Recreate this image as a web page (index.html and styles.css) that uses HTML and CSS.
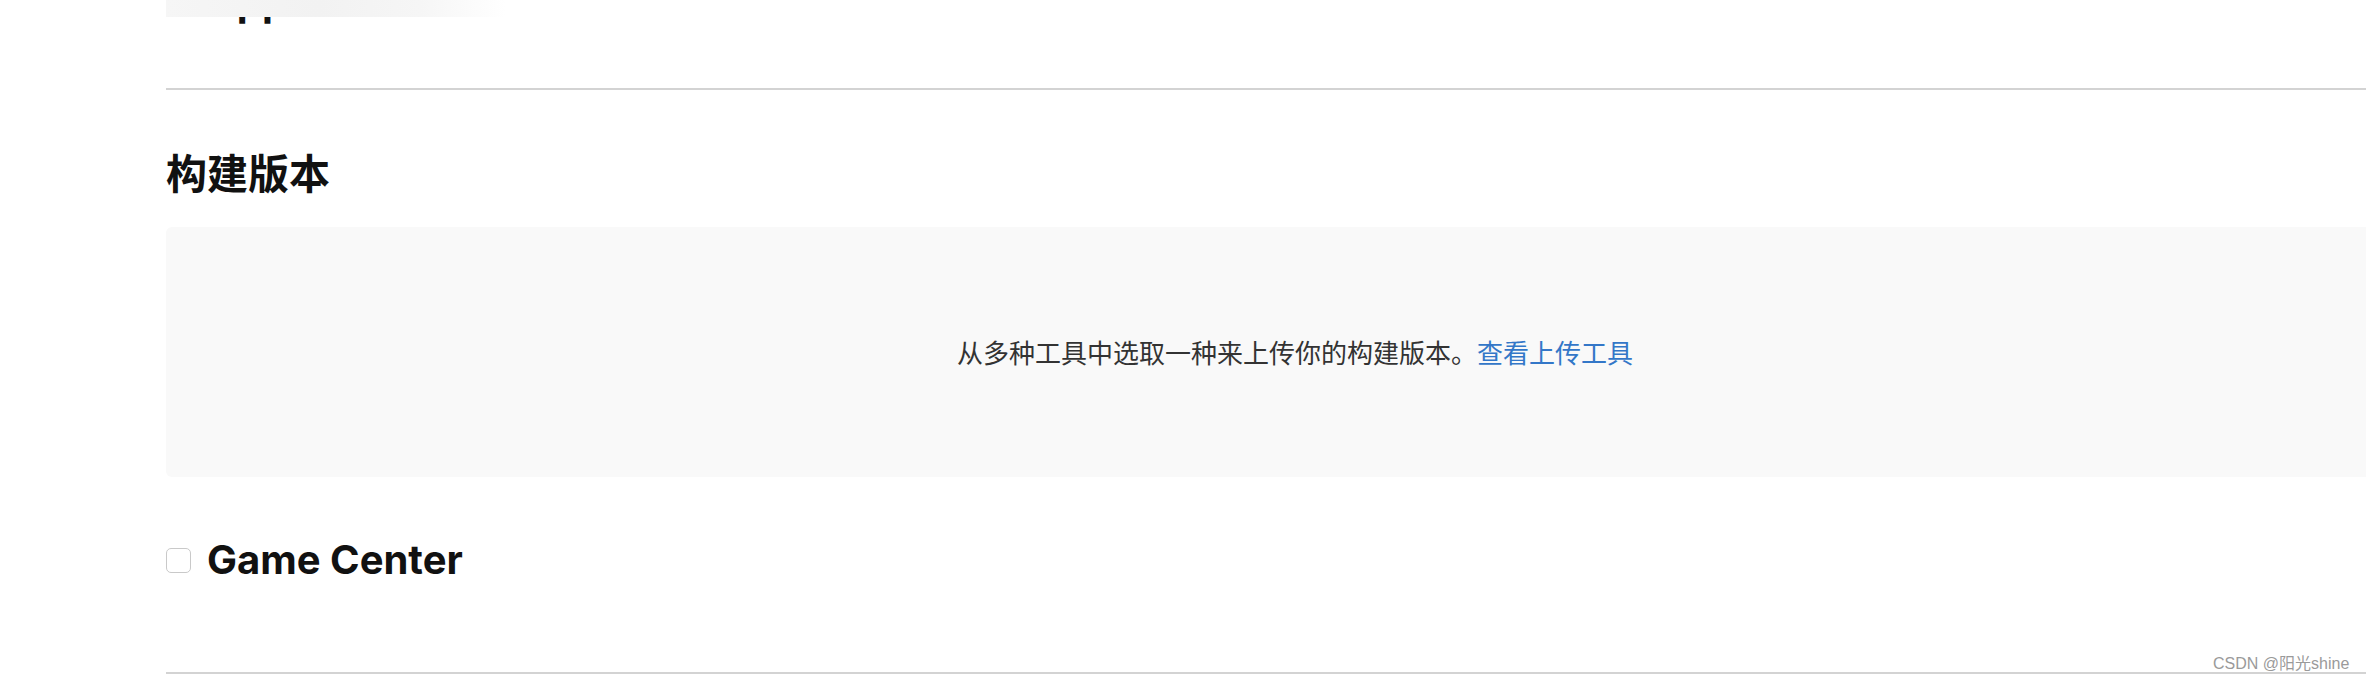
FILE: index.html
```html
<!DOCTYPE html>
<html lang="zh-CN">
<head>
<meta charset="utf-8">
<title>构建版本</title>
<link rel="stylesheet" href="styles.css">
</head>
<body>
<div class="page">
  <div class="prev-row">
    <div class="prev-title">App</div>
  </div>
  <div class="top-shade"></div>
  <hr class="divider divider-top">
  <section class="builds">
    <h2 class="section-title">构建版本</h2>
    <div class="empty-box">
      <p class="empty-text">从多种工具中选取一种来上传你的构建版本。<a class="link" href="#">查看上传工具</a></p>
    </div>
  </section>
  <section class="gc-row">
    <span class="checkbox"></span>
    <h2 class="gc-title">Game Center</h2>
  </section>
  <hr class="divider divider-bottom">
</div>
<div class="watermark">CSDN @阳光shine</div>
</body>
</html>
```

FILE: styles.css
```css
html, body {
  margin: 0;
  padding: 0;
  background: #ffffff;
  overflow: hidden;
  height: 682px;
}

body {
  font-family: Inter, "Noto Sans CJK SC", sans-serif;
  color: #111111;
  position: relative;
}

.page {
  padding-left: 166px;
  width: 2258px;
}

.prev-row {
  height: 26px;
  overflow: hidden;
}

.prev-title {
  font-size: 40px;
  font-weight: 700;
  line-height: 48px;
  margin-top: -22px;
  padding-left: 41px;
  color: #111111;
}

.top-shade {
  position: absolute;
  top: 0;
  left: 166px;
  width: 340px;
  height: 17px;
  background: linear-gradient(to right, #f6f6f6 0%, #f2f2f2 45%, #f6f6f6 75%, #ffffff 100%);
}

.divider {
  border: 0;
  height: 2px;
  background: #d3d3d3;
  margin: 0;
}

.divider-top {
  margin-top: 62px;
}

.section-title {
  margin: 0;
  font-family: "Noto Sans CJK SC", sans-serif;
  font-size: 41px;
  font-weight: 700;
  line-height: 48px;
  padding-top: 57px;
  color: #111111;
}

.empty-box {
  margin-top: 32px;
  height: 250px;
  background: #f9f9f9;
  border-radius: 6px;
  display: flex;
  align-items: center;
  justify-content: center;
}

.empty-text {
  margin: 0;
  font-family: "Noto Sans CJK SC", sans-serif;
  font-size: 26px;
  line-height: 34px;
  color: #333333;
}

.link {
  color: #3377c8;
  text-decoration: none;
}

.gc-row {
  display: flex;
  align-items: center;
  gap: 16px;
  margin-top: 59px;
  height: 48px;
}

.checkbox {
  width: 23px;
  height: 23px;
  border: 1px solid #c9c9c9;
  border-radius: 5px;
  background: #ffffff;
  flex: none;
}

.gc-title {
  margin: 0;
  font-size: 40px;
  font-weight: 700;
  line-height: 48px;
  color: #111111;
}

.divider-bottom {
  margin-top: 88px;
}

.watermark {
  position: absolute;
  left: 2213px;
  top: 655px;
  font-family: "Liberation Sans", "Noto Sans CJK SC", sans-serif;
  font-size: 16px;
  line-height: 18px;
  color: #9a9a9a;
}
```
